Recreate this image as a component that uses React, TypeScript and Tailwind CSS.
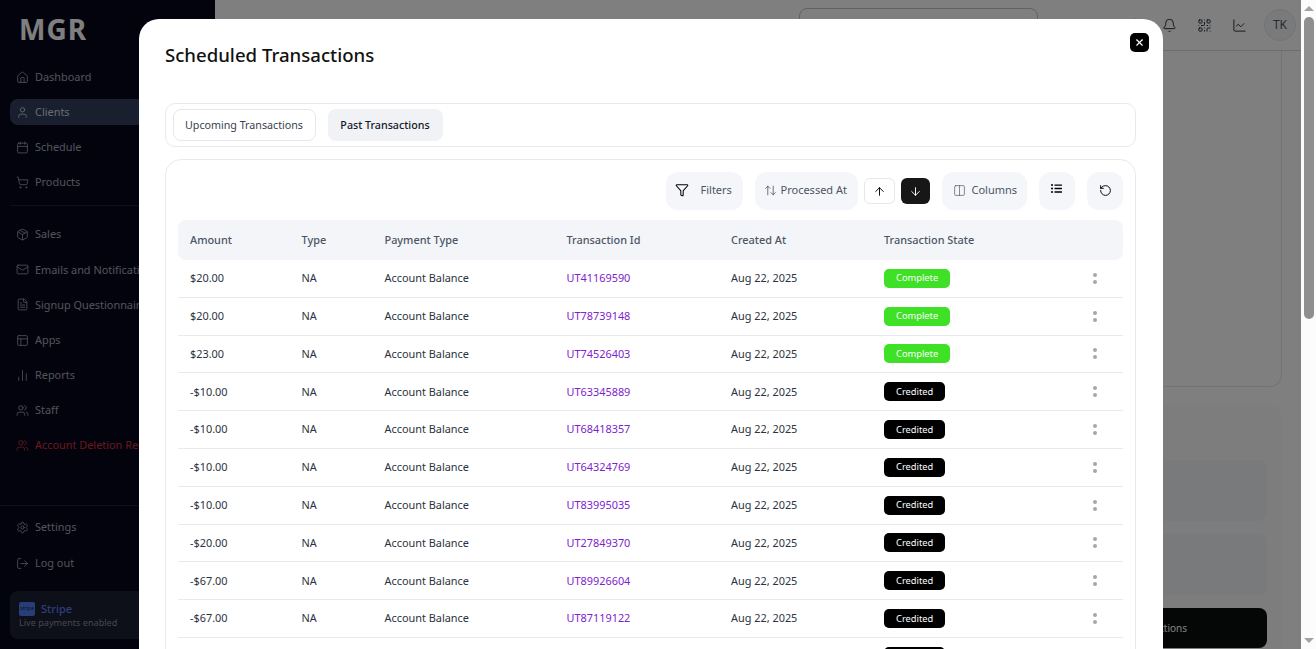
import {
  House, User, Calendar, ShoppingCart, Package, Mail, FileText, PanelsTopLeft, ChartNoAxesColumn, Users, Settings, LogOut,
  Bell, QrCode, ChartLine, X, Funnel, ArrowUpDown, ArrowUp, ArrowDown, Columns2, RotateCcw, Search, Moon, CircleHelp,
} from 'lucide-react';
import { FaListUl } from 'react-icons/fa';

const topNav = [
  { label: 'Dashboard', icon: House },
  { label: 'Clients', icon: User, active: true },
  { label: 'Schedule', icon: Calendar },
  { label: 'Products', icon: ShoppingCart },
];

const midNav = [
  { label: 'Sales', icon: Package },
  { label: 'Emails and Notifications', icon: Mail },
  { label: 'Signup Questionnaire', icon: FileText },
  { label: 'Apps', icon: PanelsTopLeft },
  { label: 'Reports', icon: ChartNoAxesColumn },
  { label: 'Staff', icon: Users },
  { label: 'Account Deletion Requests', icon: Users, danger: true },
];

const rows = [
  ['$20.00', 'UT41169590', 'Complete'],
  ['$20.00', 'UT78739148', 'Complete'],
  ['$23.00', 'UT74526403', 'Complete'],
  ['-$10.00', 'UT63345889', 'Credited'],
  ['-$10.00', 'UT68418357', 'Credited'],
  ['-$10.00', 'UT64324769', 'Credited'],
  ['-$10.00', 'UT83995035', 'Credited'],
  ['-$20.00', 'UT27849370', 'Credited'],
  ['-$67.00', 'UT89926604', 'Credited'],
  ['-$67.00', 'UT87119122', 'Credited'],
  ['-$67.00', 'UT87119123', 'Credited'],
];

const gridCols = 'grid grid-cols-[111.5px_83px_182px_164.5px_153px_1fr_32px] items-center pl-[12.5px] pr-3';

function NavItem({ label, icon: Icon, active, danger }: { label: string; icon: React.ElementType; active?: boolean; danger?: boolean }) {
  return (
    <div
      className={
        'flex h-[26px] items-center gap-[6px] rounded-lg pl-[6px] whitespace-nowrap ' +
        (active ? 'bg-[#323e5c] text-[#d5d9e2] ' : danger ? 'text-[#d4303a] ' : 'text-[#a3a8b4] ')
      }
    >
      <Icon size={13} strokeWidth={1.5} />
      <span className="text-[10.9px]">{label}</span>
    </div>
  );
}

function Sidebar() {
  return (
    <aside className="flex w-[215px] shrink-0 flex-col overflow-hidden bg-[#07071c] px-[10px]">
      <div className="pt-[10px] pl-[9px] text-[28px] leading-[38px] font-bold tracking-[1px] text-white">MGR</div>
      <div className="mt-[16px] flex flex-col gap-[9px]">
        {topNav.map((item) => (
          <NavItem key={item.label} {...item} />
        ))}
      </div>
      <div className="mt-[10px] mb-[15.6px] h-px bg-[#1c1f33]" />
      <div className="flex flex-col gap-[9.17px]">
        {midNav.map((item) => (
          <NavItem key={item.label} {...item} />
        ))}
      </div>
      <div className="-mx-[10px] mt-[46px] mb-[9px] h-px bg-[#1c1f33]" />
      <div className="flex flex-col gap-[10px]">
        <NavItem label="Settings" icon={Settings} />
        <NavItem label="Log out" icon={LogOut} />
      </div>
      <div className="mt-[14px] h-[48px] rounded-lg bg-[#1a1f33] px-[9px] pt-[11px]">
        <div className="flex items-center gap-[6px]">
          <span className="flex h-[14px] w-[16px] items-center justify-center rounded-[2px] bg-[#4f7cf0] text-[5px] text-[#10244f]">stripe</span>
          <span className="text-[11px] leading-[14px] font-medium text-[#5f7cf0]">Stripe</span>
        </div>
        <div className="text-[9.1px] leading-[14px] text-[#8a8f9c]">Live payments enabled</div>
      </div>
    </aside>
  );
}

function Background() {
  return (
    <main className="flex min-w-0 flex-1 flex-col bg-white">
      <header className="flex h-[51px] shrink-0 items-center justify-end border-b border-[#d9dade] pr-[5px] text-[#1f2937]">
        <div className="mt-[8px] mr-auto ml-[584px] h-[44px] w-[239px] self-start rounded-lg border border-[#c0c2c8]" />
        <Search size={15} strokeWidth={1.5} className="mr-[20px]" />
        <Moon size={15} strokeWidth={1.5} className="mr-[20px]" />
        <CircleHelp size={15} strokeWidth={1.5} className="mr-[20px]" />
        <Bell size={15} strokeWidth={1.5} className="mr-[20px]" />
        <QrCode size={15} strokeWidth={1.5} className="mr-[20px]" />
        <ChartLine size={15} strokeWidth={1.5} className="mr-[17px]" />
        <div className="flex h-[32px] w-[32px] items-center justify-center rounded-full border border-[#e5e7eb] bg-[#f3f4f6] text-[12px] text-[#4b5563]">TK</div>
      </header>
      <div className="flex flex-1 flex-col items-end pr-[19px]">
        <div className="h-[336px] w-[400px] rounded-b-xl border border-t-0 border-[#e5e7eb]" />
        <div className="mt-[18px] flex h-[243px] w-[400px] flex-col justify-end gap-[13px] rounded-t-xl bg-[#fbfbfc] px-[15px]">
          <div className="h-[61px] rounded-lg bg-[#f3f4f6]" />
          <div className="h-[61px] rounded-lg bg-[#f3f4f6]" />
          <div className="flex h-[40px] items-center justify-end rounded-lg bg-[#0a0c0c] pr-[80px] text-[10px] text-white">
            Transactions
          </div>
        </div>
      </div>
    </main>
  );
}

function Scrollbar() {
  return (
    <div className="flex w-[15px] shrink-0 flex-col items-center bg-[#fcfcfc]">
      <div className="mt-[6px] h-0 w-0 border-x-[5px] border-b-[5px] border-x-transparent border-b-[#a3a3a3]" />
      <div className="mt-[6px] h-[302px] w-[10px] rounded-[5px] bg-[#8f8f8f]" />
      <div className="mt-auto mb-[6px] h-0 w-0 border-x-[5px] border-t-[5px] border-x-transparent border-t-[#a3a3a3]" />
    </div>
  );
}

function ToolButton({ children, className }: { children: React.ReactNode; className?: string }) {
  return (
    <div className={'flex h-[38px] items-center rounded-xl bg-[#f5f6fa] text-[11px] text-[#4b5563] ' + (className ?? '')}>
      {children}
    </div>
  );
}

function TransactionsModal() {
  return (
    <div className="absolute inset-y-0 left-0 right-[15px] overflow-hidden bg-black/50">
      <div className="relative mx-auto mt-[19px] w-[1024px] rounded-t-[20px] bg-white px-[26px]">
        <button className="absolute top-[14px] right-[14px] flex h-[19px] w-[19px] items-center justify-center rounded-[5px] bg-black text-white">
          <X size={11} strokeWidth={2.5} />
        </button>
        <h2 className="pt-[22px] pl-[0.5px] text-[18.6px] leading-[28px] font-medium text-[#111]">Scheduled Transactions</h2>

        <div className="mt-[34px] flex h-[44px] w-[971px] items-center gap-3 rounded-[10px] border border-[#e9eaee] pl-[7px] text-[10.7px]">
          <div className="flex h-[32px] w-[143px] items-center justify-center rounded-lg border border-[#e5e7eb] text-[#374151]">Upcoming Transactions</div>
          <div className="flex h-[32px] w-[115px] items-center justify-center rounded-lg bg-[#f1f2f6] font-medium text-[#111827]">Past Transactions</div>
        </div>

        <div className="mt-[12px] w-[971px] rounded-t-2xl border border-[#e9eaee] px-3 pt-[12px]">
          <div className="flex h-[38px] items-center justify-end">
            <ToolButton className="w-[77px] gap-[12px] pb-[2px] pl-[9px]">
              <Funnel size={14} strokeWidth={1.75} className="text-black" /> Filters
            </ToolButton>
            <ToolButton className="ml-[12px] w-[103px] gap-[4px] pb-[2px] pl-[9px]">
              <ArrowUpDown size={13} strokeWidth={1.5} /> Processed At
            </ToolButton>
            <div className="ml-[6px] flex h-[26px] w-[31px] items-center justify-center rounded-md border border-[#e5e7eb] text-black">
              <ArrowUp size={13} strokeWidth={1.75} />
            </div>
            <div className="ml-[6px] flex h-[26px] w-[29px] items-center justify-center rounded-md bg-[#171717] text-white">
              <ArrowDown size={13} strokeWidth={1.75} />
            </div>
            <ToolButton className="ml-[12px] w-[85px] gap-[6px] pb-[2px] pl-[11px]">
              <Columns2 size={13} strokeWidth={1.25} /> Columns
            </ToolButton>
            <ToolButton className="ml-[12px] w-[36px] justify-center pb-[6px] text-black">
              <FaListUl size={11} />
            </ToolButton>
            <ToolButton className="ml-[12px] w-[36px] justify-center pb-[2px] pl-[1px] text-black">
              <RotateCcw size={13} strokeWidth={1.75} />
            </ToolButton>
          </div>

          <div className={gridCols + ' mt-[10px] h-[40px] rounded-lg bg-[#f4f5f9] text-[10.9px] font-medium text-[#4b5563]'}>
            <div>Amount</div>
            <div>Type</div>
            <div>Payment Type</div>
            <div>Transaction Id</div>
            <div>Created At</div>
            <div>Transaction State</div>
            <div />
          </div>

          {rows.map(([amount, id, state]) => (
            <div key={id} className={gridCols + ' h-[37.8px] border-b border-[#e8eaee] text-[10.9px] text-[#2b3340]'}>
              <div>{amount}</div>
              <div>NA</div>
              <div>Account Balance</div>
              <div className="text-[#7e22ce]">{id}</div>
              <div>Aug 22, 2025</div>
              <div>
                <span className={'inline-flex h-[19px] items-center rounded-[5px] px-3 text-[9.3px] text-white ' + (state === 'Complete' ? 'bg-[#3ee125]' : 'bg-black')}>
                  {state}
                </span>
              </div>
              <div className="flex flex-col items-center gap-[3px]">
                <span className="h-[4px] w-[4px] rounded-full bg-[#a3a8ae]" />
                <span className="h-[4px] w-[4px] rounded-full bg-[#a3a8ae]" />
              </div>
            </div>
          ))}
        </div>
      </div>
    </div>
  );
}

export default function App() {
  return (
    <div className="relative flex h-[649px] overflow-hidden font-['Noto_Sans',sans-serif]">
      <Sidebar />
      <Background />
      <Scrollbar />
      <TransactionsModal />
    </div>
  );
}
